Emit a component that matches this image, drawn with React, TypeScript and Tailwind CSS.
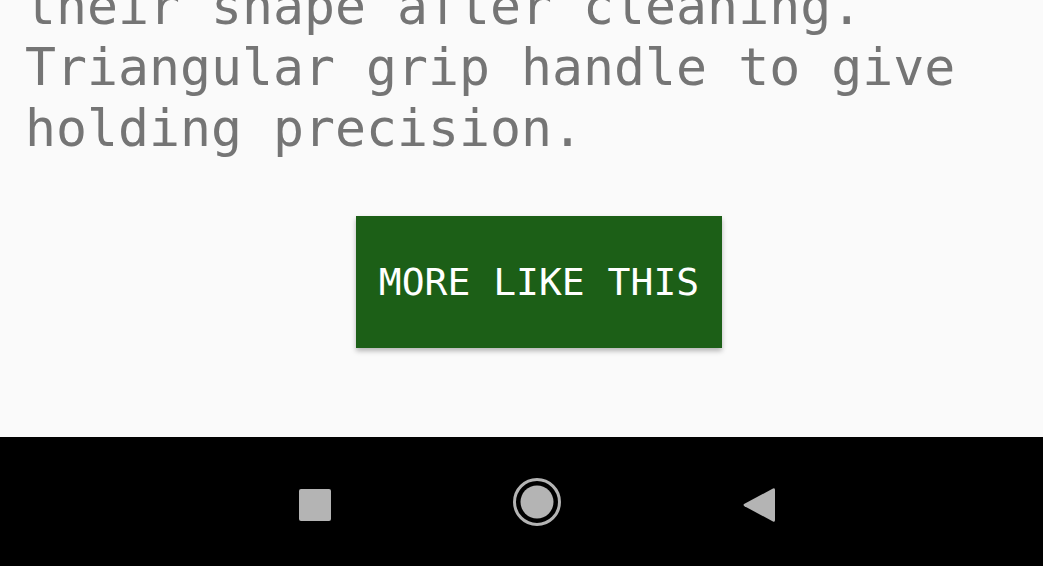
export default function App() {
  return (
    <div className="flex h-[566px] w-full flex-col overflow-hidden bg-[#fafafa] font-['DejaVu_Sans_Mono',monospace]">
      <div className="flex flex-1 flex-col">
        <p className="mt-[-24px] px-[25px] text-[51.5px] leading-[61px] text-[#757575]">
          their shape after cleaning. Triangular grip handle to give holding precision.
        </p>
        <div className="mt-[57px] flex justify-center">
          <button
            type="button"
            className="ml-[35px] h-[132px] w-[366px] bg-[#1c5f17] text-[38px] leading-none text-white shadow-[0_3px_5px_rgba(0,0,0,0.28)]"
          >
            MORE LIKE THIS
          </button>
        </div>
      </div>
      <nav className="flex h-[129px] items-center bg-black pl-[204px]">
        <div className="flex w-[222px] justify-center pt-[6px]">
          <div className="h-[32px] w-[32px] rounded-[2px] bg-[#b4b4b4]" />
        </div>
        <div className="flex w-[222px] justify-center">
          <svg width="48" height="48" viewBox="0 0 48 48">
            <circle cx="24" cy="24" r="22.5" fill="none" stroke="#b4b4b4" strokeWidth="3" />
            <circle cx="24" cy="24" r="16.5" fill="#b4b4b4" />
          </svg>
        </div>
        <div className="flex w-[222px] justify-center pt-[6px]">
          <svg width="34" height="38" viewBox="0 0 34 38">
            <path
              d="M31 2.5 Q33 1.5 33 4 L33 34 Q33 36.5 31 35.5 L2.5 20.2 Q0.5 19 2.5 17.8 Z"
              fill="#b4b4b4"
            />
          </svg>
        </div>
      </nav>
    </div>
  );
}
